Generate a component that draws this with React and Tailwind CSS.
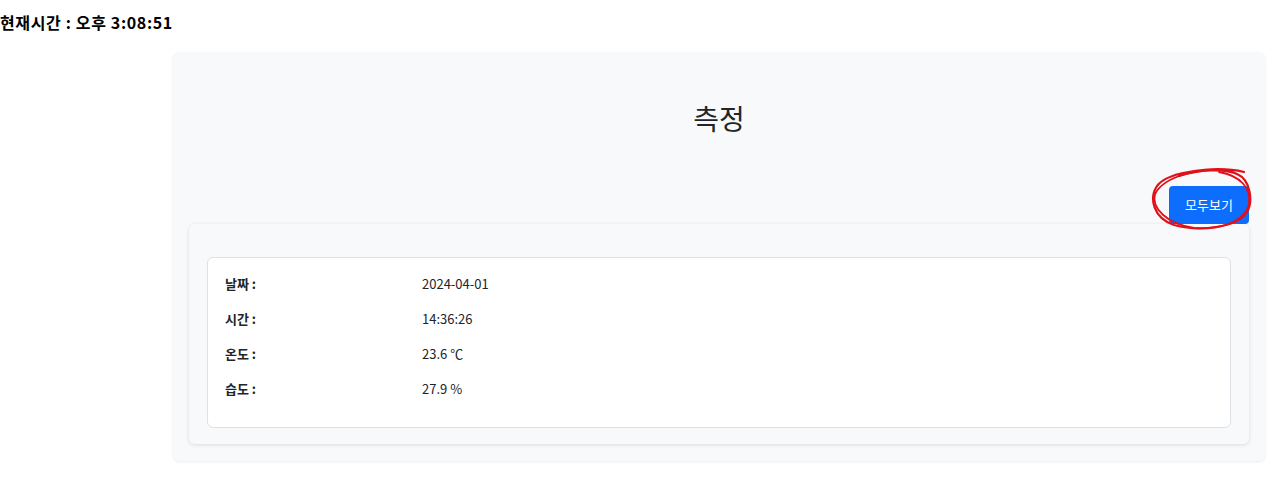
import React from 'react';

const rows = [
  { label: '날짜 :', value: '2024-04-01' },
  { label: '시간 :', value: '14:36:26' },
  { label: '온도 :', value: '23.6 ℃' },
  { label: '습도 :', value: '27.9 %' },
];

const App = () => {
  return (
    <div className="min-h-[485px] bg-white text-black font-['Noto_Sans_CJK_KR',sans-serif]">
      {/* Current time */}
      <div className="h-[44px] flex items-center text-[16px] tracking-[0.04em] font-bold leading-none">
        현재시간 : 오후 3:08:51
      </div>

      <div className="pl-[173px] pr-[15px] pt-[8px]">
        <div className="bg-[#f8f9fa] rounded-md shadow-[0_1px_3px_rgba(0,0,0,0.08)] px-[16px] pb-[17px]">
          <h1 className="pt-[52px] h-[134px] text-center text-[28px] font-normal leading-none text-[#212529]">
            측정
          </h1>

          <div className="flex justify-end">
            <div className="relative">
              <button className="w-[80px] h-[38px] bg-[#0d6efd] text-white text-[13px] rounded-[4px]">
                모두보기
              </button>
              {/* hand-drawn red mark */}
              <svg
                className="absolute -left-[20px] -top-[20px] pointer-events-none"
                width="106"
                height="68"
                viewBox="0 0 106 68"
                fill="none"
              >
                <path
                  d="M95 6 C70 0 20 4 8 20 C0 32 4 52 25 59 C50 66 88 62 98 46 C104 36 102 14 88 8 C75 2 50 4 30 10"
                  stroke="#e0101a"
                  strokeWidth="2.2"
                  strokeLinecap="round"
                />
                <path
                  d="M78 4 C50 2 15 10 6 28 C2 42 18 58 45 62 C70 64 96 56 100 38 C102 22 92 10 70 6"
                  stroke="#e0101a"
                  strokeWidth="1.8"
                  strokeLinecap="round"
                />
              </svg>
            </div>
          </div>

          <div className="bg-[#f8f9fa] rounded-md shadow-[0_1px_4px_rgba(0,0,0,0.12)] px-[18px] pt-[33px] pb-[16px]">
            <div className="bg-white border border-[#dee2e6] rounded-md px-[17px] pt-[8px] pb-[21px]">
              {rows.map((r) => (
                <div key={r.label} className="flex items-center h-[35px] text-[13px] text-[#212529]">
                  <span className="w-[197px] font-bold">{r.label}</span>
                  <span>{r.value}</span>
                </div>
              ))}
            </div>
          </div>
        </div>
      </div>
    </div>
  );
};

export default App;
